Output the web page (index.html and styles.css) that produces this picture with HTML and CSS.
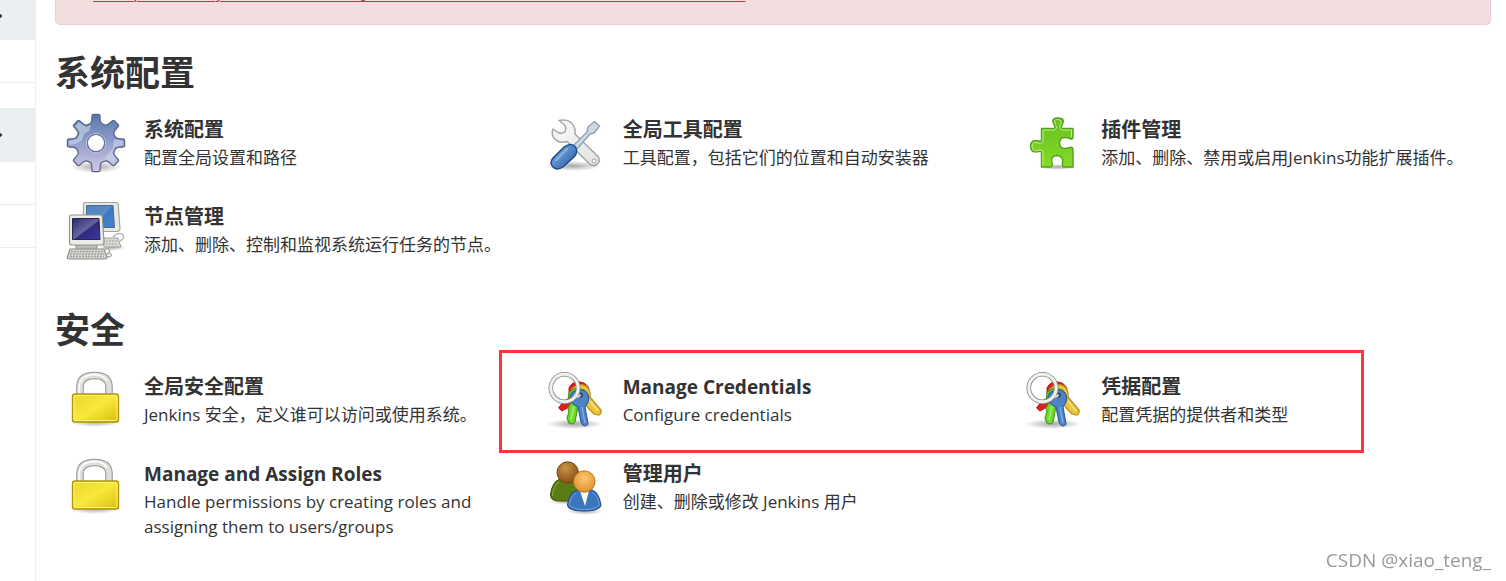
FILE: index.html
```html
<!DOCTYPE html>
<html lang="zh-CN">
<head>
<meta charset="utf-8">
<meta name="viewport" content="width=device-width, initial-scale=1">
<title>系统管理</title>
<link rel="stylesheet" href="styles.css">
</head>
<body>
<svg class="defs" aria-hidden="true">
  <defs>
    <linearGradient id="gearFill" x1="0" y1="0" x2="0" y2="1"><stop offset="0" stop-color="#5878aa"/><stop offset=".45" stop-color="#8b9bca"/><stop offset="1" stop-color="#d5c8e6"/></linearGradient>
    <linearGradient id="metal" x1="0" y1="0" x2="1" y2="1"><stop offset="0" stop-color="#fafafa"/><stop offset="1" stop-color="#e0e2df"/></linearGradient>
    <linearGradient id="gold" x1="0" y1="0" x2="1" y2="1"><stop offset="0" stop-color="#ead829"/><stop offset=".5" stop-color="#f8e83a"/><stop offset="1" stop-color="#d8bd0c"/></linearGradient>
    <linearGradient id="leaf" x1="0" y1="0" x2="0" y2="1"><stop offset="0" stop-color="#6cbd24"/><stop offset="1" stop-color="#82dc27"/></linearGradient>
    <linearGradient id="screenBack" x1="0" y1="0" x2="1" y2="1"><stop offset="0" stop-color="#326bb5"/><stop offset="1" stop-color="#4585cf"/></linearGradient>
    <linearGradient id="screenFront" x1="0" y1="0" x2="1" y2="1"><stop offset="0" stop-color="#2c2970"/><stop offset=".5" stop-color="#66659a"/><stop offset=".55" stop-color="#302b7c"/><stop offset="1" stop-color="#3e38a0"/></linearGradient>
    <radialGradient id="shade"><stop offset="0" stop-color="#000" stop-opacity=".35"/><stop offset="1" stop-color="#000" stop-opacity="0"/></radialGradient>
    <radialGradient id="brownHead" cx=".4" cy=".3" r=".7"><stop offset="0" stop-color="#c89446"/><stop offset="1" stop-color="#885015"/></radialGradient>
    <radialGradient id="orangeHead" cx=".5" cy=".35" r=".7"><stop offset="0" stop-color="#fbc878"/><stop offset="1" stop-color="#df8c20"/></radialGradient>
    <linearGradient id="blueHandle" x1="0" y1="0" x2="1" y2="1"><stop offset="0" stop-color="#2b60a8"/><stop offset=".4" stop-color="#5f92d0"/><stop offset="1" stop-color="#245296"/></linearGradient>
  </defs>

  <symbol id="gear" viewBox="0 0 60 60">
    <ellipse cx="30" cy="54" rx="25" ry="6" fill="url(#shade)"/>
    <g transform="translate(30 30)" stroke-linejoin="round">
      <path fill="url(#gearFill)" stroke="#5b678a" stroke-width="1.3" fill-rule="evenodd" d="M-5.5-19.7Q-4-21-4-27Q-4-28.6-2.5-28.6H2.5Q4-28.6 4-27Q4-21 5.5-19.7Q7.500-18 10-17.800Q12-18 16.500-22.200Q17.500-23 18.300-22.200L22.200-18.300Q23-17.500 22.200-16.500Q18-12 17.800-10Q18-7.500 19.700-5.500Q21-4 27-4Q28.600-4 28.600-2.500V2.500Q28.600 4 27 4Q21 4 19.700 5.500Q18 7.500 17.800 10Q18 12 22.200 16.500Q23 17.500 22.200 18.300L18.300 22.200Q17.500 23 16.500 22.200Q12 18 10 17.800Q7.500 18 5.500 19.700Q4 21 4 27Q4 28.600 2.500 28.600H-2.500Q-4 28.600-4 27Q-4 21-5.500 19.700Q-7.500 18-10 17.800Q-12 18-16.500 22.200Q-17.500 23-18.300 22.200L-22.200 18.300Q-23 17.500-22.200 16.500Q-18 12-17.800 10Q-18 7.500-19.700 5.500Q-21 4-27 4Q-28.600 4-28.600 2.500V-2.500Q-28.600-4-27-4Q-21-4-19.700-5.500Q-18-7.500-17.800-10Q-18-12-22.200-16.500Q-23-17.500-22.200-18.300L-18.300-22.200Q-17.500-23-16.500-22.200Q-12-18-10-17.800Q-7.500-18-5.500-19.700ZM9 0A9 9 0 1 0-9 0A9 9 0 1 0 9 0Z"/>
      <path fill="#c6d6ea" opacity=".65" d="M-21-17L-17-21L-10-16L-5-18L-7-12L-12-9L-14-3L-20 1L-27 2V-2L-19-4L-16-10ZM6 19L12 11L17 5L18-4L27-2V2L19 4L16 10L20 17L17 20L10 16Z"/>
      <circle r="9.600" fill="none" stroke="#c9d0e6" stroke-width="1"/>
      <circle r="8.600" fill="none" stroke="#66729a" stroke-width="1.200"/>
    </g>
  </symbol>

  <symbol id="tools" viewBox="0 0 60 60">
    <ellipse cx="28" cy="53" rx="28" ry="5" fill="url(#shade)"/>
    <path fill="url(#metal)" stroke="#a4a6a4" stroke-width="1.500" stroke-linejoin="round" d="M14 7.500Q25 5.500 29 13.500Q31 17 30 21L53 43.500Q56 48 52 51.500Q48 54 44.500 51L22 28.500Q14 31 9 25Q6 21 8 16L13 19.500Q17 21.500 20 18.500Q22 14 18.500 11Z"/>
    <circle cx="49" cy="48" r="2" fill="#fff" stroke="#a4a6a4"/>
    <path fill="#d0d9e3" stroke="#8fa1b4" stroke-width="1.400" stroke-linejoin="round" d="M43 14L49.500 8.500L54.500 13L49 20L45 21L31 37L27 34L42 19Z"/>
    <path fill="url(#blueHandle)" stroke="#1d4b8b" stroke-width="1.400" d="M19 34Q26 29 30.500 34Q33.500 39 29 44L18 54Q12 58 8 54Q4 50 8 45Z"/>
    <path d="M22 36L11 47" stroke="#9dc0e8" stroke-width="2.500" stroke-linecap="round" opacity=".6"/>
  </symbol>

  <symbol id="puzzle" viewBox="0 0 60 60">
    <ellipse cx="35" cy="54" rx="20" ry="3" fill="url(#shade)"/>
    <path fill="url(#leaf)" stroke="#55a01f" stroke-width="1.400" stroke-linejoin="round" d="M18.500 15.500H30Q33 15.500 31.500 12.500Q27 5.500 34.500 5Q43 5 39 12Q37 15.500 40 15.500H50V24Q50 27 47 25.500Q37 22 36.500 30Q37 38 47 34.500Q50 33.500 50 37V54H41Q39 54 39.500 50.500Q41 43 34 42.500Q27 43 29 49.500Q30 54 27.500 54H18.500V40.500Q18.500 37.500 16 38.500Q7.500 40.500 7.500 33Q8 25.500 15.500 28Q18.500 29.500 18.500 26.500Z"/>
    <path fill="none" stroke="#baf47d" stroke-width="1" d="M20 52.500V39Q19 36 15 37.500Q9 39 9 33Q9.500 28 15 30Q20 31 20 28V17H31Q35 15.500 32.500 11.500Q30 6.500 34.500 6.500Q40 7 37.500 11.500Q35.500 15.500 39 17H48.500V24"/>
  </symbol>

  <symbol id="computers" viewBox="0 0 60 60">
    <ellipse cx="46" cy="47" rx="13" ry="4" fill="url(#shade)"/>
    <path d="M47 37Q51 32 56 34Q60 38 54 41" fill="none" stroke="#b9bab5" stroke-width="1.500"/>
    <path fill="#d8d9d5" stroke="#a1a39d" d="M38 38H52L55 47H38Z"/>
    <path d="M40 41H51M40 44H52" stroke="#a5a7a1" stroke-dasharray="2 1"/>
    <path fill="#e7e8e4" stroke="#a3a59e" stroke-width="1.200" d="M19 2.500H50Q52 2.500 52.200 4L54 29Q53.500 31.500 51.500 31.500H19Q17.500 31.500 17.500 29V4Q17.500 2.500 19 2.500Z"/>
    <path fill="url(#screenBack)" stroke="#4f6991" d="M20.500 5.500H47L48.500 27.500H20.500Z"/>
    <path fill="#fff" opacity=".15" d="M21 6H46L34 20L21 24Z"/>
    <path fill="#babbb5" stroke="#868880" d="M10 43H31V50H10Z"/>
    <path fill="#ecede9" stroke="#92948d" stroke-width="1.200" d="M5 15H34.500Q36 15 36.300 17L38 42Q38 45 35 45H6Q3.500 45 3.500 42V17Q3.500 15 5 15Z"/>
    <path fill="url(#screenFront)" stroke="#28264f" stroke-width="1" d="M6.500 18.500H33L34 39.500H6.500Z"/>
    <path fill="#d5d6d1" stroke="#8c8e87" stroke-width="1.200" stroke-linejoin="round" d="M4 49H38L41 57.500Q41 59 39 59H3Q1 59 1.500 57Z"/>
    <path d="M5 51.500H37M4 54H38M4 56.500H38" stroke="#a3a59e" stroke-width="1.300" stroke-dasharray="2 1"/>
    <path d="M39 49Q45 47 43 53" fill="none" stroke="#aaa" stroke-width="1.500"/>
    <ellipse cx="43" cy="55" rx="2.500" ry="2" fill="#eee" stroke="#999"/>
  </symbol>

  <symbol id="lock" viewBox="0 0 60 60">
    <ellipse cx="29" cy="52" rx="26" ry="5" fill="url(#shade)"/>
    <path d="M14 26V17Q14 5.500 28.700 5.500Q43 5.500 43 17V26" fill="none" stroke="#969993" stroke-width="7.600"/>
    <path d="M14 26V17Q14 5.500 28.700 5.500Q43 5.500 43 17V26" fill="none" stroke="#dcdfda" stroke-width="5.400"/>
    <path d="M13 25V17Q14 5 28.700 4.500Q38 5 41 11" fill="none" stroke="#fff" stroke-width="1.500"/>
    <rect x="6.500" y="24" width="46" height="28" rx="2.500" fill="url(#gold)" stroke="#b19409" stroke-width="1.400"/>
    <rect x="8" y="25.500" width="43" height="25" rx="1" fill="none" stroke="#fff27a" stroke-width="1"/>
  </symbol>

  <symbol id="keys" viewBox="0 0 60 60">
    <ellipse cx="30" cy="54" rx="28" ry="5" fill="url(#shade)"/>
    <path fill="#dc2020" stroke="#b51616" d="M24 18Q27 11 35 12Q42 13 44 19L40 24L27 32L24 37L17 41L13.500 38L18 32L24 28Z"/>
    <path fill="#ecc43a" stroke="#bd8d15" stroke-width="1.200" d="M26 20Q33 12 41 16Q46 20 45 27L56 40Q57 43 54 45L49 44L44 39L38 31Z"/>
    <path d="M45 31L53 41" stroke="#f7e28a" stroke-width="1.500"/>
    <path fill="#6fdb2b" stroke="#449e18" stroke-width="1.200" d="M24 23Q29 16 39 20L37 31L33 36L30 52Q28 55 24 53L22 48L24 42L23 38L27 31Q22 28 24 23Z"/>
    <path d="M29 36L26 50" stroke="#b0ef7a" stroke-width="1.300"/>
    <path fill="#4f83c7" stroke="#315f9c" stroke-width="1.200" d="M28 22Q34 18 40 21Q45 25 43 32L40 37L43 54Q41 57 38 55L36 52L33 37Q26 34 25 28Q25 24 28 22Z"/>
    <path d="M37 37L40 53" stroke="#86b3e6" stroke-width="1.300"/>
    <circle cx="35.500" cy="25" r="2.600" fill="#35495e"/>
    <circle cx="19.500" cy="18" r="13.700" fill="none" stroke="#858783" stroke-width="4.600"/>
    <circle cx="19.500" cy="18" r="13.700" fill="none" stroke="#f0f1ef" stroke-width="3"/>
    <path d="M30.500 26Q33 28 35.500 24.500" fill="none" stroke="#ddd" stroke-width="2"/>
  </symbol>

  <symbol id="users" viewBox="0 0 60 60">
    <ellipse cx="22" cy="44" rx="18" ry="4" fill="url(#shade)"/>
    <ellipse cx="40" cy="54" rx="18" ry="4" fill="url(#shade)"/>
    <path fill="#5b7b13" stroke="#3e580b" stroke-width="1.200" d="M15 22Q7 25 5.500 38Q6 44 15 44H30L36 23Z"/>
    <path d="M14 25Q8 29 7.500 39" fill="none" stroke="#8ead3d"/>
    <circle cx="22.700" cy="15.500" r="10.700" fill="url(#brownHead)" stroke="#744411" stroke-width="1"/>
    <path fill="#3b75bb" stroke="#25528f" stroke-width="1.200" d="M32 33Q24 36 22.500 48Q24 54 39 54Q54 54 56 48Q54 36 47 33Z"/>
    <path d="M31 36Q25 40 24 48Q28 52.500 39 52.500Q51 52.500 54.500 48Q53 39 47 35" fill="none" stroke="#75a3da"/>
    <path fill="#f6f8fa" d="M35 34H44L40 49Z"/>
    <circle cx="39.300" cy="24.500" r="10.700" fill="url(#orangeHead)" stroke="#bb741b" stroke-width="1"/>
  </symbol>
</svg>

<div class="page">
  <aside class="sidebar">
    <div class="pane-head pane-head-first"><span class="chevron"></span></div>
    <div class="pane-row"></div>
    <div class="pane-gap"></div>
    <div class="pane-head"><span class="chevron"></span></div>
    <div class="pane-row"></div>
    <div class="pane-row"></div>
  </aside>

  <main class="content">
    <div class="alert"><a href="#advisory">Multiple security vulnerabilities in Jenkins 2.299 and earlier, LTS 2.289.1 and earlier</a></div>

    <section class="section">
      <h2>系统配置</h2>
      <div class="items">
        <a class="item" href="#configure"><svg class="icon" aria-hidden="true"><use href="#gear"/></svg><span class="text"><strong>系统配置</strong><span>配置全局设置和路径</span></span></a>
        <a class="item" href="#tools-config"><svg class="icon" aria-hidden="true"><use href="#tools"/></svg><span class="text"><strong>全局工具配置</strong><span>工具配置，包括它们的位置和自动安装器</span></span></a>
        <a class="item" href="#plugins"><svg class="icon" aria-hidden="true"><use href="#puzzle"/></svg><span class="text"><strong>插件管理</strong><span>添加、删除、禁用或启用Jenkins功能扩展插件。</span></span></a>
        <a class="item" href="#nodes"><svg class="icon" aria-hidden="true"><use href="#computers"/></svg><span class="text"><strong>节点管理</strong><span>添加、删除、控制和监视系统运行任务的节点。</span></span></a>
      </div>
    </section>

    <section class="section">
      <h2>安全</h2>
      <div class="items">
        <a class="item" href="#security"><svg class="icon" aria-hidden="true"><use href="#lock"/></svg><span class="text"><strong>全局安全配置</strong><span>Jenkins 安全，定义谁可以访问或使用系统。</span></span></a>
        <a class="item" href="#credentials"><svg class="icon" aria-hidden="true"><use href="#keys"/></svg><span class="text" lang="en"><strong>Manage Credentials</strong><span>Configure credentials</span></span></a>
        <a class="item" href="#providers"><svg class="icon" aria-hidden="true"><use href="#keys"/></svg><span class="text"><strong>凭据配置</strong><span>配置凭据的提供者和类型</span></span></a>
        <a class="item" href="#roles"><svg class="icon" aria-hidden="true"><use href="#lock"/></svg><span class="text" lang="en"><strong>Manage and Assign Roles</strong><span>Handle permissions by creating roles and assigning them to users/groups</span></span></a>
        <a class="item" href="#users-config"><svg class="icon" aria-hidden="true"><use href="#users"/></svg><span class="text"><strong>管理用户</strong><span>创建、删除或修改 Jenkins 用户</span></span></a>
        <div class="highlight"></div>
      </div>
    </section>
  </main>
</div>
<div class="watermark">CSDN @xiao_teng_</div>
</body>
</html>
```
FILE: styles.css
```css
* { box-sizing: border-box; }

body {
  margin: 0;
  overflow: hidden;
  background: #fff;
  color: #333;
  font: 17px/25px "Open Sans", "Noto Sans CJK SC", sans-serif;
}

.defs { position: absolute; width: 0; height: 0; }

.page { display: flex; min-height: 100vh; }

.sidebar {
  flex: none;
  width: 36px;
  border-right: 1px solid #eaeff2;
}

.pane-head {
  display: flex;
  align-items: center;
  height: 54px;
  overflow: hidden;
  background: #eaeff2;
}

.pane-head-first { height: 40px; padding-bottom: 8px; }

.chevron {
  width: 6px;
  height: 6px;
  margin-left: -5px;
  border: solid #333;
  border-width: 2px 2px 0 0;
  transform: rotate(45deg);
}

.pane-row { height: 43px; border-bottom: 1px solid #eaeff2; }
.pane-gap { height: 25px; }

.content { flex: 1; min-width: 0; padding: 0 15px 0 19px; }

.alert {
  margin-top: -21px;
  padding: 0 37px 20px;
  border: 1px solid #ebccd1;
  border-top: 0;
  border-radius: 0 0 5px 5px;
  background: #f2dede;
}

.alert a {
  color: #a94442;
  text-decoration-thickness: 1px;
  text-underline-offset: 3px;
}

.section { padding-top: 27px; }
.section + .section { padding-top: 49px; }

h2 {
  margin: 0 0 19px;
  font-size: 35px;
  line-height: 42px;
}

.items {
  position: relative;
  display: grid;
  grid-template-columns: repeat(3, minmax(0, 1fr));
  row-gap: 27px;
}

.item {
  display: flex;
  gap: 18px;
  min-height: 60px;
  padding: 0 20px 0 11px;
  color: inherit;
  text-decoration: none;
}

.item:nth-child(3) { padding-right: 0; }

.icon { flex: none; width: 60px; height: 60px; }

.text {
  display: flex;
  flex-direction: column;
  min-width: 0;
  padding-top: 2px;
}

.text strong { font-size: 20px; line-height: 30px; }
.text:lang(en) strong { font-size: 19px; }

.highlight {
  position: absolute;
  top: -20px;
  left: 444px;
  width: 865px;
  height: 103px;
  border: 3px solid #ff3535;
}

.watermark {
  position: fixed;
  right: 15px;
  bottom: 8px;
  color: #999;
  font-size: 19px;
}
```
